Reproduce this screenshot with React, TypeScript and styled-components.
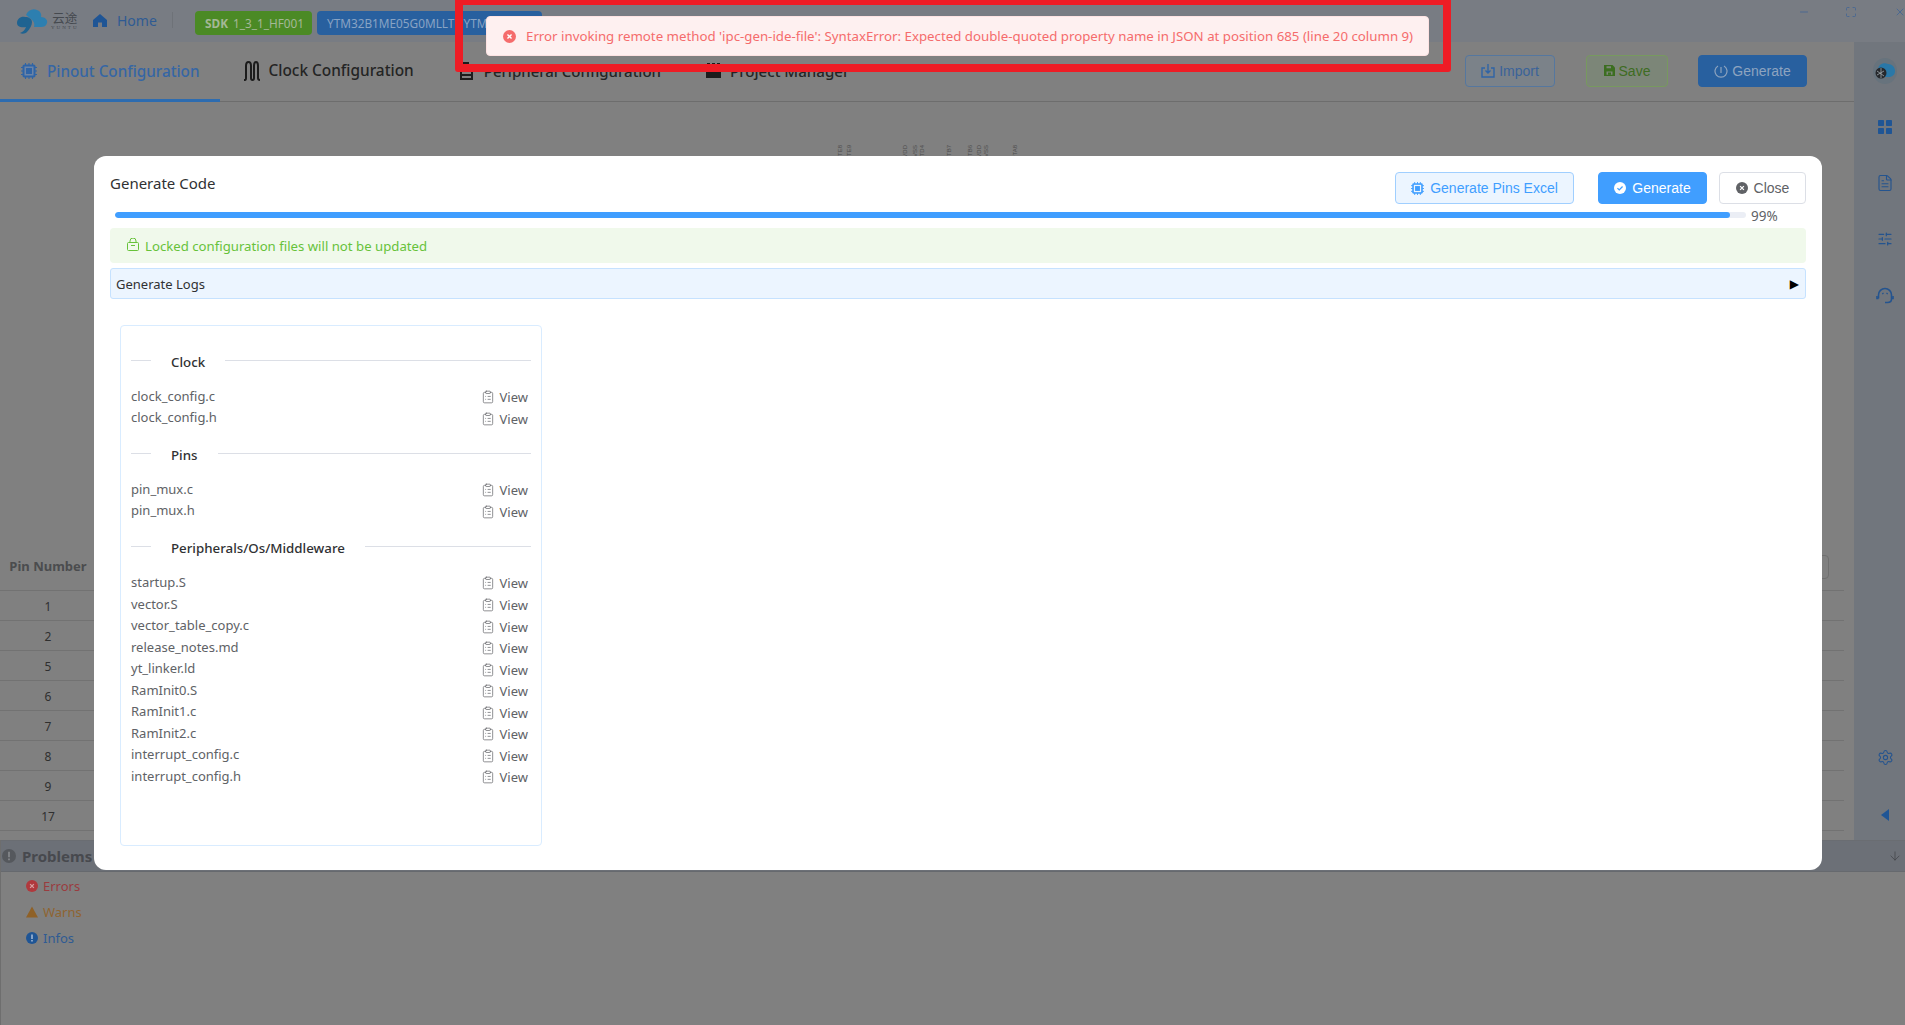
import React from 'react';
import styled, { createGlobalStyle } from 'styled-components';
import { ArrowDown, ClipboardList, FileText, Maximize, Minus, Settings, SlidersHorizontal, X } from 'lucide-react';

const Global = createGlobalStyle`
  html, body { margin: 0; padding: 0; overflow: hidden; background: #808080; }
  * { box-sizing: border-box; }
  svg { flex: none; }
  body { font-family: "Noto Sans", "Noto Sans CJK SC", sans-serif; }
`;

const Page = styled.div`
  position: relative; width: 1905px; height: 1025px; overflow: hidden;
  display: flex; flex-direction: column; background: #808080; color: #2a2a2a;
`;
const TitleBar = styled.header`
  height: 42px; flex: none; display: flex; align-items: center; background: #787c83; padding-left: 16px;
`;
const Logo = styled.div`display: flex; align-items: center; width: 62px; height: 26px; gap: 3px;`;
const LogoWords = styled.div`display: flex; flex-direction: column; align-items: center; color: #45494f;`;
const LogoCn = styled.span`font: 400 12.5px/12px "Noto Sans CJK SC", sans-serif;`;
const LogoEn = styled.span`font: 400 5px/6px "Liberation Serif", serif; letter-spacing: 2px; margin-top: 1px;`;
const HomeLink = styled.div`
  display: flex; align-items: center; gap: 10px; margin: 0 0 2px 15px; padding-right: 16px; height: 16px;
  color: #2f5b93; font-size: 14px; border-right: 1px solid #6e7278;
  width: 80px;
`;
const Tag = styled.div<{ $bg: string; $fg: string; $w: number }>`
  height: 24px; width: ${p => p.$w}px; margin-top: 4px; border-radius: 4px; background: ${p => p.$bg}; color: ${p => p.$fg};
  font-size: 11.8px; line-height: 24px; padding-left: 10px; white-space: nowrap; flex: none;
  b { font-weight: 700; margin-right: 5px; }
`;
const TagRow = styled.div`display: flex; gap: 5px; margin-left: 22px;`;
const WinButtons = styled.div`
  position: absolute; top: 6px; right: 0; display: flex; align-items: center; color: #3e6396;
`;
const WinBtn = styled.span<{ $w: number; $mr: number }>`
  width: ${p => p.$w}px; margin-right: ${p => p.$mr}px; display: flex; justify-content: center;
`;

const Body = styled.div`flex: none; height: 798px; display: flex;`;
const MainCol = styled.div`flex: 1; min-width: 0; display: flex; flex-direction: column;`;
const TabBar = styled.nav`
  height: 60px; flex: none; display: flex; align-items: stretch; border-bottom: 1px solid #6d6d6d; position: relative;
`;
const Tab = styled.div<{ $active?: boolean; $pl: number; $pr: number; $gap: number; $size: number }>`
  display: flex; align-items: center; height: 60px; padding: 0 ${p => p.$pr}px 0 ${p => p.$pl}px; gap: ${p => p.$gap}px;
  font-size: ${p => p.$size}px; font-weight: 500; white-space: nowrap; padding-top: 0;
  color: ${p => (p.$active ? '#3566a5' : '#242424')};
  border-bottom: 3px solid ${p => (p.$active ? '#2d6cb0' : 'transparent')};
`;
const TabActions = styled.div`margin-left: auto; display: flex; align-items: center; padding-right: 47px; padding-bottom: 2px;`;
const ActionBtn = styled.button<{ $fg: string; $bd: string; $bg: string; $w: number; $ml: number }>`
  width: ${p => p.$w}px; margin-left: ${p => p.$ml}px; height: 32px; border-radius: 4px; border: 1px solid ${p => p.$bd};
  background: ${p => p.$bg}; color: ${p => p.$fg}; display: flex; align-items: center; justify-content: center; gap: 4px;
  font: 14px "Liberation Sans", sans-serif; padding: 0;
`;

const Canvas = styled.div`height: 439px; flex: none; position: relative;`;
const PinLabel = styled.span<{ $x: number }>`
  position: absolute; left: ${p => p.$x}px; top: 43px; writing-mode: vertical-rl; transform: rotate(180deg);
  font: 6px/7px "Liberation Sans", sans-serif; color: #4c4c4c; white-space: nowrap;
`;
const Table = styled.div`flex: 1; margin-right: 10px; overflow: hidden; position: relative;`;
const THead = styled.div`
  height: 50px; display: flex; align-items: center; border-bottom: 1px solid #727272;
  font-size: 13px; font-weight: 700; color: #4b4c4e;
`;
const PinHead = styled.div`width: 96px; text-align: center; white-space: nowrap;`;
const Search = styled.div`
  position: absolute; left: 1700px; top: 14px; width: 129px; height: 24px; border: 1px solid #6f6f6f; border-radius: 4px;
`;
const TRow = styled.div`
  height: 30px; display: flex; align-items: center; border-bottom: 1px solid #727272; font-size: 12px; color: #2f2f2f; padding-top: 2px;
`;
const PinCell = styled.div`width: 96px; text-align: center;`;

const SideBar = styled.aside`
  width: 51px; flex: none; background: #71767d; color: #24548f; position: relative;
  display: flex; flex-direction: column; align-items: center; padding-left: 11px;
`;
const SideItem = styled.div<{ $h: number }>`height: ${p => p.$h}px; display: flex; align-items: center; justify-content: center; flex: none;`;
const Avatar = styled.div`width: 24px; height: 26px; border-radius: 50%; background: #67737d; display: flex; align-items: center; justify-content: center;`;
const SideSpacer = styled.div`flex: 1;`;

const Problems = styled.section`flex: 1; display: flex; flex-direction: column; border-left: 1px solid #6e6e6e;`;
const ProblemsBar = styled.div`
  height: 32px; flex: none; background: #6c7077; border-bottom: 1px solid #66696e; border-top: 1px solid #6a6d72;
  display: flex; align-items: center; gap: 6px; padding: 0 3px 0 1px; color: #47494e; font-size: 15px; font-weight: 700;
`;
const BarArrow = styled.span`margin-left: auto; display: flex; color: #3f4145;`;
const ProblemList = styled.div`padding: 1px 0 0 25px;`;
const ProblemItem = styled.div<{ $c: string }>`
  height: 26px; display: flex; align-items: center; gap: 5px; font-size: 13px; color: ${p => p.$c};
`;

const RedFrame = styled.div`
  position: absolute; left: 455px; top: -3px; width: 996px; height: 75px; border: 8px solid #ee1c25; border-radius: 3px; z-index: 5;
`;
const Toast = styled.div`
  position: absolute; left: 486px; top: 16px; width: 943px; height: 40px; z-index: 6; background: #fef0f0;
  border: 1px solid #fde2e2; border-radius: 4px; display: flex; align-items: center; gap: 10px; padding-left: 16px;
  color: #f56c6c; font-size: 13.27px; white-space: nowrap;
`;

const Modal = styled.div`
  position: absolute; left: 94px; top: 156px; width: 1728px; height: 714px; background: #fff; border-radius: 12px;
  z-index: 3; padding: 16px; color: #606266; font-size: 14px;
`;
const ModalHead = styled.div`display: flex; align-items: flex-start; height: 32px;`;
const ModalTitle = styled.div`font-size: 15px; color: #303133; margin-top: -1px; line-height: 24px;`;
const HeadButtons = styled.div`margin-left: auto; display: flex;`;
const HeadBtn = styled.button<{ $kind: 'plain' | 'primary' | 'default'; $w: number; $ml: number }>`
  width: ${p => p.$w}px; margin-left: ${p => p.$ml}px; height: 32px; border-radius: 4px; padding: 0;
  display: flex; align-items: center; justify-content: center; gap: 6px; font: 14px "Liberation Sans", sans-serif;
  border: 1px solid ${p => (p.$kind === 'plain' ? '#a0cfff' : p.$kind === 'primary' ? '#409eff' : '#dcdfe6')};
  background: ${p => (p.$kind === 'plain' ? '#ecf5ff' : p.$kind === 'primary' ? '#409eff' : '#fff')};
  color: ${p => (p.$kind === 'plain' ? '#409eff' : p.$kind === 'primary' ? '#fff' : '#606266')};
`;
const ProgressRow = styled.div`height: 20px; margin-top: 2px; padding-left: 5px; display: flex; align-items: center;`;
const Track = styled.div`width: 1631px; height: 6px; border-radius: 3px; background: #ebeef5; overflow: hidden; margin-top: -2px;`;
const Fill = styled.div`height: 100%; border-radius: 3px; background: #409eff;`;
const Pct = styled.div`margin-left: 5px; font-size: 13.5px; color: #606266;`;
const Notice = styled.div`
  height: 35px; margin-top: 2px; background: #f0f9eb; border-radius: 4px; color: #67c23a; display: flex; align-items: center;
  gap: 6px; padding-left: 17px; font-size: 13.2px;
  svg { margin-top: -3px; }
`;
const LogsBar = styled.div`
  height: 31px; margin-top: 5px; background: #ecf5ff; border: 1px solid #c6e2ff; border-radius: 3px; display: flex; align-items: center;
  justify-content: space-between; padding: 0 6px 0 5px; color: #303133; font-size: 13px;
`;
const Triangle = styled.span`font: 12px/12px "DejaVu Sans", sans-serif; color: #000;`;
const Card = styled.div`
  margin: 26px 0 0 10px; width: 422px; height: 521px; border: 1px solid #d9ecff; border-radius: 4px; padding: 23px 10px 0;
`;
const SectionHead = styled.div`height: 22px; display: flex; align-items: center; color: #303133; font-weight: 500; font-size: 13.3px;`;
const RuleShort = styled.span`width: 20px; height: 1px; background: #dcdfe6; flex: none;`;
const RuleLong = styled.span`flex: 1; height: 1px; background: #dcdfe6;`;
const SectionName = styled.span`padding: 3px 20px 0; white-space: nowrap;`;
const FileList = styled.div`margin: 15px 0 13px;`;
const FileRow = styled.div`height: 21.55px; display: flex; align-items: center; justify-content: space-between; padding-right: 3px; font-size: 13px;`;
const FileName = styled.span`margin-top: -2px;`;
const ViewLink = styled.span`display: flex; align-items: center; gap: 5px; margin-top: 1px; color: #606266;`;

const labels = [837, 846, 902, 912, 919, 946, 967, 976, 983, 1012];
const labelText = ['PTE8', 'PTE9', 'VDD', 'VSS', 'PTD4', 'PTB7', 'PTB6', 'VDD', 'VSS', 'PTA8'];

const CircleIcon = ({ c, size, kind, ink = '#fff' }: { c: string; size: number; kind: 'x' | 'check' | 'info'; ink?: string }) => (
  <svg width={size} height={size} viewBox="0 0 16 16">
    <circle cx="8" cy="8" r="8" fill={c} />
    {kind === 'x' && <path d="M5.500 5.500l5 5M10.500 5.500l-5 5" stroke={ink} strokeWidth="1.700" fill="none" />}
    {kind === 'check' && <path d="M4.600 8.200l2.400 2.400 4.400-4.600" stroke={ink} strokeWidth="1.700" fill="none" />}
    {kind === 'info' && <path d="M8 3.200v6.200M8 10.800v2" stroke={ink} strokeWidth="2.200" fill="none" />}
  </svg>
);

const ChipIcon = ({ c, size, gap }: { c: string; size: number; gap: string }) => (
  <svg width={size} height={size} viewBox="0 0 16 16">
    <path d="M4.500 0v16M8 0v16M11.500 0v16M0 4.500h16M0 8h16M0 11.500h16" stroke={c} strokeWidth="1.100" fill="none" />
    <rect x="1.500" y="1.500" width="13" height="13" rx="1.800" fill={c} />
    <rect x="3.500" y="3.500" width="9" height="9" fill={gap} />
    <rect x="5" y="5" width="6" height="6" fill={c} />
  </svg>
);

const CloudLogo = () => (
  <svg width="32" height="26" viewBox="0 0 32 26">
    <path d="M10 7C12 2 17 0 21 2c3 1 5 4 4 7 4 0 7 3 6 6-1 3-3 4-6 4h-7c1-3 0-6-3-8-2-1-3-3-5-4z" fill="#2d7fb0" />
    <path d="M1 15c0-4 4-7 8-6 4 0 7 2 7 5 0 3-2 7-5 10-2 2-5 2-7 1 3-1 5-3 6-6-4 1-9 0-9-4z" fill="#1f6391" />
  </svg>
);

const FILE_SECTIONS = [
  { name: 'Clock', files: ['clock_config.c', 'clock_config.h'] },
  { name: 'Pins', files: ['pin_mux.c', 'pin_mux.h'] },
  {
    name: 'Peripherals/Os/Middleware',
    files: ['startup.S', 'vector.S', 'vector_table_copy.c', 'release_notes.md', 'yt_linker.ld', 'RamInit0.S', 'RamInit1.c', 'RamInit2.c', 'interrupt_config.c', 'interrupt_config.h'],
  },
];

export default function App() {
  return (
    <Page>
      <Global />
      <TitleBar>
        <Logo>
          <CloudLogo />
          <LogoWords>
            <LogoCn>云途</LogoCn>
            <LogoEn>YUNTU</LogoEn>
          </LogoWords>
        </Logo>
        <HomeLink>
          <svg width="14" height="13" viewBox="0 0 14 13">
            <path d="M7 0L14 6v7H9V8.500H5V13H0V6z" fill="#1f5595" />
          </svg>
          Home
        </HomeLink>
        <TagRow>
          <Tag $bg="#4b8a25" $fg="#a4b896" $w={117}><b>SDK</b>1_3_1_HF001</Tag>
          <Tag $bg="#28609f" $fg="#88a3c4" $w={225}>YTM32B1ME05G0MLLT : YTM32B1</Tag>
        </TagRow>
        <WinButtons>
          <WinBtn $w={20} $mr={27}><Minus size={12} strokeWidth={1.5} /></WinBtn>
          <WinBtn $w={20} $mr={34}><Maximize size={12} strokeWidth={1.5} /></WinBtn>
          <WinBtn $w={10} $mr={0}><X size={12} strokeWidth={1.5} /></WinBtn>
        </WinButtons>
      </TitleBar>

      <Body>
        <MainCol>
          <TabBar>
            <Tab $active $pl={21} $pr={20} $gap={10} $size={15.25}>
              <ChipIcon c="#2f64a6" size={16} gap="#6c84a6" />
              Pinout Configuration
            </Tab>
            <Tab $pl={23} $pr={20} $gap={8} $size={15.4}>
              <svg width="18" height="20" viewBox="0 0 18 20" fill="none" stroke="#1c1c1c" strokeWidth="2">
                <path d="M1 19h1c1 0 1-1 1-2V5c0-2 1-4 2.500-4S8 3 8 5v12c0 1 .5 2 1.500 2S11 18 11 17V5c0-2 .5-4 2-4s2 2 2 4v12c0 1 0 2 2 2" />
              </svg>
              Clock Configuration
            </Tab>
            <Tab $pl={26} $pr={20} $gap={11} $size={15}>
              <svg width="13" height="18" viewBox="0 0 13 18">
                <path d="M1 9h11v8H1z" fill="none" stroke="#1c1c1c" strokeWidth="2" />
                <path d="M0 13h13" stroke="#1c1c1c" strokeWidth="2" />
                <path d="M3 0h6v3H5v3H3z" fill="#1c1c1c" />
              </svg>
              Peripheral Configuration
            </Tab>
            <Tab $pl={25} $pr={20} $gap={9} $size={15.1}>
              <svg width="15" height="15" viewBox="0 0 15 15">
                <path d="M0 3h15v12H0z" fill="#1c1c1c" />
                <path d="M1 0h3v3H1zM6 0h3v3H6zM11 0h3v3h-3z" fill="#1c1c1c" />
              </svg>
              Project Manager
            </Tab>
            <TabActions>
              <ActionBtn $fg="#3a6299" $bd="#55779f" $bg="#7b8289" $w={90} $ml={0}>
                <svg width="14" height="14" viewBox="0 0 14 14" fill="none" stroke="#2f64a6" strokeWidth="1.400">
                  <path d="M4 4H1v9h12V4h-3M7 0v9M4.500 6.500L7 9l2.500-2.500" />
                </svg>
                Import
              </ActionBtn>
              <ActionBtn $fg="#3e6c22" $bd="#77995f" $bg="#7c8678" $w={82} $ml={31}>
                <svg width="11" height="11" viewBox="0 0 11 11">
                  <path d="M0 0h8.500L11 2.500V11H0z" fill="#3c6e20" />
                  <path d="M2.500 1.200h4.500v2H2.500zM2.500 6.500h6v3.300h-6z" fill="#7c8678" />
                  <path d="M4 7.500h3v2.300H4z" fill="#3c6e20" />
                </svg>
                Save
              </ActionBtn>
              <ActionBtn $fg="#8ea4bf" $bd="#28609f" $bg="#28609f" $w={109} $ml={30}>
                <svg width="14" height="14" viewBox="0 0 14 14" fill="none" stroke="#8ea4bf" strokeWidth="1.200">
                  <path d="M4 2A6 6 0 1 0 10 2M7 3v6" />
                </svg>
                Generate
              </ActionBtn>
            </TabActions>
          </TabBar>
          <Canvas>
            {labels.map((x, i) => (
              <PinLabel key={x} $x={x}>{labelText[i]}</PinLabel>
            ))}
          </Canvas>
          <Table>
            <THead>
              <PinHead>Pin Number</PinHead>
            </THead>
            <Search />
            {[1, 2, 5, 6, 7, 8, 9, 17].map(n => (
              <TRow key={n}><PinCell>{n}</PinCell></TRow>
            ))}
          </Table>
        </MainCol>
        <SideBar>
          <SideItem $h={57}>
            <Avatar>
              <svg width="22" height="20" viewBox="0 0 22 20">
                <path d="M4 9c0-5 5-8 10-6 4 0 7 3 7 7s-3 6-7 6H7C5 16 4 12 4 9z" fill="#2a78a8" />
                <circle cx="7" cy="12" r="5.500" fill="#26282c" />
                <path d="M3 10l7 5M3 14l7-4M7 7v10" stroke="#a0a8ad" strokeWidth=".8" />
              </svg>
            </Avatar>
          </SideItem>
          <SideItem $h={56}>
            <svg width="14" height="14" viewBox="0 0 14 14" fill="#1f5595">
              <rect width="6" height="6" rx=".8" />
              <rect x="8" width="6" height="6" rx=".8" />
              <rect y="8" width="6" height="6" rx=".8" />
              <rect x="8" y="8" width="6" height="6" rx=".8" />
            </svg>
          </SideItem>
          <SideItem $h={56}><FileText size={18} strokeWidth={1.5} /></SideItem>
          <SideItem $h={56}><SlidersHorizontal size={16} strokeWidth={1.8} /></SideItem>
          <SideItem $h={55}>
            <svg width="18" height="18" viewBox="0 0 18 18" fill="none" stroke="#24548f" strokeWidth="1.600">
              <path d="M2.500 12.500V9a6.500 6.500 0 0 1 13 0v4c0 2-1.500 3.500-4 3.500H9" />
              <path d="M1 10v2.500h1.500M17 10v2.500h-1.500" />
              <path d="M6.500 7l.8 1M11.500 7l-.8 1" />
            </svg>
          </SideItem>
          <SideSpacer />
          <SideItem $h={66}><Settings size={17} strokeWidth={1.5} /></SideItem>
          <SideItem $h={50}>
            <svg width="8" height="12" viewBox="0 0 8 12"><path d="M8 0v12L0 6z" fill="#1f5595" /></svg>
          </SideItem>
        </SideBar>
      </Body>

      <Problems>
        <ProblemsBar>
          <CircleIcon c="#55585d" size={14} kind="info" ink="#808387" />
          Problems
          <BarArrow><ArrowDown size={14} strokeWidth={1.2} /></BarArrow>
        </ProblemsBar>
        <ProblemList>
          <ProblemItem $c="#9a3c3f"><CircleIcon c="#b0393d" size={12} kind="x" ink="#d8a0a2" />Errors</ProblemItem>
          <ProblemItem $c="#8f6431">
            <svg width="12" height="12" viewBox="0 0 12 12"><path d="M6 .5L12 11.500H0z" fill="#8f6127" /></svg>
            Warns
          </ProblemItem>
          <ProblemItem $c="#2f5b93"><CircleIcon c="#1f5595" size={12} kind="info" ink="#9db4d0" />Infos</ProblemItem>
        </ProblemList>
      </Problems>

      <Modal>
        <ModalHead>
          <ModalTitle>Generate Code</ModalTitle>
          <HeadButtons>
            <HeadBtn $kind="plain" $w={179} $ml={0}><ChipIcon c="#409eff" size={13} gap="#ecf5ff" />Generate Pins Excel</HeadBtn>
            <HeadBtn $kind="primary" $w={109} $ml={24}><CircleIcon c="#fff" size={12} kind="check" ink="#409eff" />
              Generate
            </HeadBtn>
            <HeadBtn $kind="default" $w={87} $ml={12}><CircleIcon c="#606266" size={12} kind="x" />Close</HeadBtn>
          </HeadButtons>
        </ModalHead>
        <ProgressRow>
          <Track><Fill style={{ width: '99%' }} /></Track>
          <Pct>99%</Pct>
        </ProgressRow>
        <Notice>
          <svg width="12" height="13" viewBox="0 0 12 13" fill="none" stroke="#67c23a" strokeWidth="1">
            <rect x=".5" y="4.500" width="11" height="8" rx="1" />
            <path d="M3 4.500V3a3 3 0 0 1 6 0v1.500M4 7.500h4" />
          </svg>
          Locked configuration files will not be updated
        </Notice>
        <LogsBar>
          Generate Logs
          <Triangle>▶</Triangle>
        </LogsBar>
        <Card>
          {FILE_SECTIONS.map(section => (
            <div key={section.name}>
              <SectionHead>
                <RuleShort />
                <SectionName>{section.name}</SectionName>
                <RuleLong />
              </SectionHead>
              <FileList>
                {section.files.map(f => (
                  <FileRow key={f}>
                    <FileName>{f}</FileName>
                    <ViewLink><ClipboardList size={14} strokeWidth={1.2} />View</ViewLink>
                  </FileRow>
                ))}
              </FileList>
            </div>
          ))}
        </Card>
      </Modal>

      <RedFrame />
      <Toast>
        <CircleIcon c="#f56c6c" size={13} kind="x" />
        Error invoking remote method 'ipc-gen-ide-file': SyntaxError: Expected double-quoted property name in JSON at position 685 (line 20 column 9)
      </Toast>
    </Page>
  );
}
